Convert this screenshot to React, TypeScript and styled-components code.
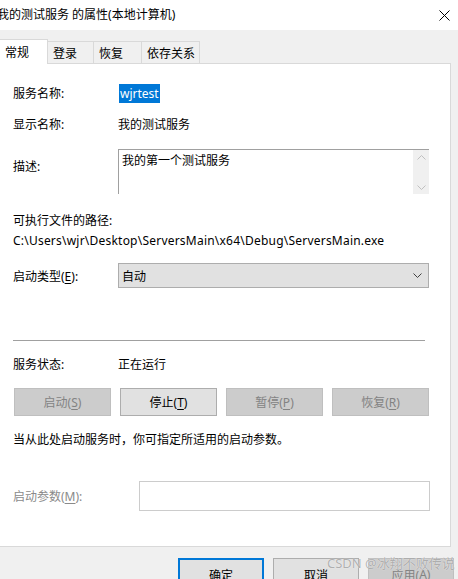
import styled, { createGlobalStyle } from 'styled-components';

const Global = createGlobalStyle`
  html, body {
    margin: 0;
    padding: 0;
    background: #f0f0f0;
  }
  * {
    box-sizing: border-box;
  }
`;

const FONT = `"Segoe UI", "Noto Sans", "Noto Sans CJK SC", sans-serif`;

const Window = styled.div`
  position: relative;
  width: 458px;
  height: 579px;
  overflow: hidden;
  background: #f0f0f0;
  font-family: ${FONT};
  font-size: 12px;
  color: #000;
  display: flex;
  flex-direction: column;
`;

const TitleBar = styled.div`
  height: 30px;
  flex: none;
  background: #fff;
  display: flex;
  align-items: center;
  justify-content: space-between;
  padding-right: 8px;
`;

const Title = styled.div`
  margin-left: -3px;
  margin-top: -2px;
  white-space: nowrap;
`;

const CloseIcon = () => (
  <svg width="11" height="11" viewBox="0 0 11 11">
    <path d="M0.5 0.5 L10.5 10.5 M10.5 0.5 L0.5 10.5" stroke="#000" strokeWidth="1" fill="none" />
  </svg>
);

const Body = styled.div`
  padding: 9px 7px 0 0;
  display: flex;
  flex-direction: column;
`;

const TabStrip = styled.div`
  display: flex;
  align-items: flex-end;
  height: 24px;
  position: relative;
  z-index: 1;
`;

const Tab = styled.div<{ $active?: boolean; $w: number }>`
  width: ${(p) => p.$w}px;
  height: ${(p) => (p.$active ? 25 : 22)}px;
  margin-bottom: ${(p) => (p.$active ? -1 : 0)}px;
  background: ${(p) => (p.$active ? '#fff' : '#f0f0f0')};
  border: 1px solid #d9d9d9;
  border-left: ${(p) => (p.$active ? 'none' : '0')};
  border-bottom: ${(p) => (p.$active ? 'none' : '0')};
  padding-left: 5px;
  padding-top: ${(p) => (p.$active ? 3 : 2)}px;
  white-space: nowrap;
`;

const Panel = styled.div`
  height: 484px;
  background: #fff;
  border: 1px solid #d9d9d9;
  border-left: none;
  padding: 0 0 0 13px;
  display: flex;
  flex-direction: column;
`;

const Row = styled.div<{ $top: number; $h?: number; $align?: string }>`
  margin-top: ${(p) => p.$top}px;
  height: ${(p) => p.$h ?? 16}px;
  display: flex;
  align-items: ${(p) => p.$align ?? 'center'};
  white-space: nowrap;
`;

const Label = styled.div<{ $w?: number; $muted?: boolean; $pt?: number }>`
  width: ${(p) => p.$w ?? 105}px;
  flex: none;
  color: ${(p) => (p.$muted ? '#8a8a8a' : '#000')};
  padding-top: ${(p) => p.$pt ?? 0}px;
`;

const Selected = styled.span`
  background: #0078d7;
  color: #fff;
  padding: 1px 1px;
  margin-left: 1px;
  line-height: 17px;
`;

const Path = styled.span`
  letter-spacing: 0.22px;
`;

const Key = styled.span`
  text-decoration: underline;
  text-underline-offset: 2px;
`;

const TextArea = styled.div`
  width: 311px;
  height: 45px;
  border: 1px solid #a0a0a0;
  border-right: none;
  border-bottom: none;
  display: flex;
  background: #fff;
`;

const TextAreaText = styled.div`
  flex: 1;
  padding: 1px 0 0 3px;
`;

const Scrollbar = styled.div`
  width: 16px;
  background: #f0f0f0;
  display: flex;
  flex-direction: column;
  justify-content: space-between;
  align-items: center;
  padding: 5px 0 4px;
`;

const Chevron = ({ up, color = '#c0c0c0' }: { up?: boolean; color?: string }) => (
  <svg width="9" height="5" viewBox="0 0 9 5">
    <path
      d={up ? 'M0.5 4.5 L4.5 0.5 L8.5 4.5' : 'M0.5 0.5 L4.5 4.5 L8.5 0.5'}
      stroke={color}
      strokeWidth="1"
      fill="none"
    />
  </svg>
);

const Select = styled.div`
  width: 311px;
  height: 25px;
  background: #e1e1e1;
  border: 1px solid #adadad;
  display: flex;
  align-items: center;
  justify-content: space-between;
  padding: 0 6px 0 3px;
`;

const Separator = styled.div`
  margin-top: 52px;
  width: 412px;
  height: 1px;
  background: #a0a0a0;
`;

const ButtonGrid = styled.div`
  margin-top: 16px;
  width: 416px;
  display: grid;
  grid-template-columns: repeat(4, 1fr);
  column-gap: 9px;
  padding-left: 1px;
`;

const Button = styled.div<{ $disabled?: boolean }>`
  height: 28px;
  display: flex;
  align-items: center;
  justify-content: center;
  background: ${(p) => (p.$disabled ? '#cccccc' : '#e1e1e1')};
  border: 1px solid ${(p) => (p.$disabled ? '#bfbfbf' : '#adadad')};
  color: ${(p) => (p.$disabled ? '#838383' : '#000')};
  white-space: nowrap;
`;

const Input = styled.div`
  width: 291px;
  height: 30px;
  border: 1px solid #cccccc;
  background: #fff;
`;

const Footer = styled.div`
  margin-top: 11px;
  display: flex;
  gap: 9px;
  padding-left: 178px;
`;

const FooterButton = styled(Button)<{ $default?: boolean }>`
  width: 86px;
  height: 24px;
  border: ${(p) => (p.$default ? '2px solid #0078d7' : p.$disabled ? '1px solid #bfbfbf' : '1px solid #adadad')};
  align-items: flex-start;
  padding-top: ${(p) => (p.$default ? 6 : 7)}px;
`;

const Watermark = styled.div`
  position: absolute;
  left: 327px;
  top: 553px;
  font-size: 13px;
  color: rgba(150, 150, 150, 0.75);
  text-shadow: 0 0 1px #fff;
  white-space: nowrap;
  font-family: "Noto Sans", "Noto Sans CJK SC", sans-serif;
`;

export default function App() {
  return (
    <Window>
      <Global />
      <TitleBar>
        <Title>我的测试服务 的属性(本地计算机)</Title>
        <CloseIcon />
      </TitleBar>
      <Body>
        <TabStrip>
          <Tab $active $w={48}>常规</Tab>
          <Tab $w={46}>登录</Tab>
          <Tab $w={48}>恢复</Tab>
          <Tab $w={58}>依存关系</Tab>
        </TabStrip>
        <Panel>
          <Row $top={20} $h={18}>
            <Label>服务名称:</Label>
            <Selected>wjrtest</Selected>
          </Row>
          <Row $top={14}>
            <Label>显示名称:</Label>
            <span>我的测试服务</span>
          </Row>
          <Row $top={17} $h={45} $align="flex-start">
            <Label $pt={8}>描述:</Label>
            <TextArea>
              <TextAreaText>我的第一个测试服务</TextAreaText>
              <Scrollbar>
                <Chevron up />
                <Chevron />
              </Scrollbar>
            </TextArea>
          </Row>
          <Row $top={18}>
            <Label $w={200}>可执行文件的路径:</Label>
          </Row>
          <Row $top={4}>
            <Path>C:\Users\wjr\Desktop\ServersMain\x64\Debug\ServersMain.exe</Path>
          </Row>
          <Row $top={15} $h={25}>
            <Label>
              启动类型(<Key>E</Key>):
            </Label>
            <Select>
              <span>自动</span>
              <Chevron color="#404040" />
            </Select>
          </Row>
          <Separator />
          <Row $top={15}>
            <Label>服务状态:</Label>
            <span>正在运行</span>
          </Row>
          <ButtonGrid>
            <Button $disabled>
              启动(<Key>S</Key>)
            </Button>
            <Button>
              停止(<Key>T</Key>)
            </Button>
            <Button $disabled>
              暂停(<Key>P</Key>)
            </Button>
            <Button $disabled>
              恢复(<Key>R</Key>)
            </Button>
          </ButtonGrid>
          <Row $top={15}>
            <span>当从此处启动服务时，你可指定所适用的启动参数。</span>
          </Row>
          <Row $top={34} $h={30}>
            <Label $w={126} $muted>
              启动参数(<Key>M</Key>):
            </Label>
            <Input />
          </Row>
        </Panel>
      </Body>
      <Footer>
        <FooterButton $default>确定</FooterButton>
        <FooterButton>取消</FooterButton>
        <FooterButton $disabled>
          应用(<Key>A</Key>)
        </FooterButton>
      </Footer>
      <Watermark>CSDN @冰翔不败传说</Watermark>
    </Window>
  );
}
